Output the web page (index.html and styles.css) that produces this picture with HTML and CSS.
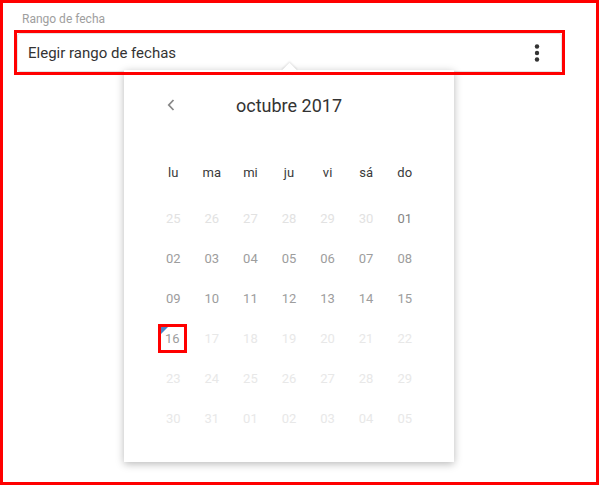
FILE: index.html
```html
<!DOCTYPE html>
<html lang="es">
<head>
  <meta charset="UTF-8" />
  <title>Rango de fecha</title>
  <link rel="stylesheet" href="styles.css">
</head>
<body>
  <div class="frame">
    <div class="field-label">Rango de fecha</div>

    <div class="date-field">
      <div class="date-input">
        <span>Elegir rango de fechas</span>
        <svg class="kebab" width="6" height="18" viewBox="0 0 6 18">
          <circle cx="3" cy="2.5" r="2.2" fill="#333" />
          <circle cx="3" cy="9" r="2.2" fill="#333" />
          <circle cx="3" cy="15.5" r="2.2" fill="#333" />
        </svg>
      </div>
    </div>

    <div class="picker">
      <div class="caret"></div>
      <div class="cal-head">
        <svg class="prev" width="8" height="12" viewBox="0 0 8 12">
          <path d="M6.5 1 L1.8 6 L6.5 11" fill="none" stroke="#888" stroke-width="1.8" />
        </svg>
        <div class="month">octubre 2017</div>
        <span></span>
      </div>

      <div class="weekdays">
        <span>lu</span><span>ma</span><span>mi</span><span>ju</span><span>vi</span><span>sá</span><span>do</span>
      </div>

      <div class="days">
        <span class="other">25</span><span class="other">26</span><span class="other">27</span><span class="other">28</span><span class="other">29</span><span class="other">30</span><span class="first">01</span>
        <span>02</span><span>03</span><span>04</span><span>05</span><span>06</span><span>07</span><span>08</span>
        <span>09</span><span>10</span><span>11</span><span>12</span><span>13</span><span>14</span><span>15</span>
        <span class="today"><i>16</i></span><span class="off">17</span><span class="off">18</span><span class="off">19</span><span class="off">20</span><span class="off">21</span><span class="off">22</span>
        <span class="off">23</span><span class="off">24</span><span class="off">25</span><span class="off">26</span><span class="off">27</span><span class="off">28</span><span class="off">29</span>
        <span class="off">30</span><span class="off">31</span><span class="off">01</span><span class="off">02</span><span class="off">03</span><span class="off">04</span><span class="off">05</span>
      </div>
    </div>
  </div>
</body>
</html>
```

FILE: styles.css
```css
body {
  margin: 0;
  font-family: Roboto, 'Liberation Sans', sans-serif;
  background: #fff;
  color: #333;
}

.frame {
  position: relative;
  width: 599px;
  height: 485px;
  box-sizing: border-box;
  border: 3px solid #ff0000;
  padding: 9px 0 0 11px;
}

.field-label {
  font-size: 12px;
  line-height: 14px;
  color: #9e9e9e;
  padding-left: 8px;
  margin-bottom: 4px;
}

.date-field {
  position: relative;
  width: 551px;
  height: 45px;
  box-sizing: border-box;
  padding: 3px;
}

/* annotation outline, drawn over the popup */
.date-field::after {
  content: "";
  position: absolute;
  inset: 0;
  z-index: 3;
  border: 3px solid #ff0000;
  pointer-events: none;
}

.date-input {
  display: flex;
  align-items: center;
  justify-content: space-between;
  height: 100%;
  box-sizing: border-box;
  padding: 0 21px 0 10px;
  background: #fff;
  border: 1px solid #e4e4e4;
  border-radius: 3px;
  font-size: 15px;
  color: #333;
}

.kebab {
  display: block;
}

.picker {
  position: absolute;
  z-index: 1;
  left: 121px;
  top: 67px;
  width: 330px;
  height: 392px;
  box-sizing: border-box;
  padding: 20px 30px 0;
  background: #fff;
  box-shadow: 0 2px 8px rgba(0, 0, 0, 0.28);
}

.caret {
  position: absolute;
  top: -5px;
  left: 160px;
  width: 11px;
  height: 11px;
  background: #fff;
  transform: rotate(45deg);
  box-shadow: -1px -1px 2px rgba(0, 0, 0, 0.1);
}

.cal-head {
  position: relative;
  display: grid;
  grid-template-columns: 38.5px 1fr 38.5px;
  align-items: center;
  height: 30px;
}

.prev {
  justify-self: center;
  margin-left: -4px;
}

.month {
  text-align: center;
  font-size: 18px;
  color: #333;
}

.weekdays,
.days {
  display: grid;
  grid-template-columns: repeat(7, 1fr);
  text-align: center;
}

.weekdays {
  margin-top: 32px;
  height: 40px;
  align-items: center;
  font-size: 13px;
  color: #3a3a3a;
}

.days {
  margin-top: 6px;
  grid-auto-rows: 40px;
  align-items: center;
  font-size: 13px;
  color: #9d9d9d;
}

.days span {
  display: flex;
  justify-content: center;
}

.days .other {
  color: #e2e2e2;
}

.days .first {
  color: #858585;
}

.days .off {
  color: #e8e8e8;
}

.days .today i {
  position: relative;
  display: flex;
  align-items: center;
  justify-content: center;
  width: 29px;
  height: 29px;
  box-sizing: border-box;
  border: 3px solid #ff0000;
  font-style: normal;
  margin-left: -2px;
}

.days .today i::before {
  content: "";
  position: absolute;
  top: 0;
  left: 0;
  border-top: 7px solid #4a86c8;
  border-right: 7px solid transparent;
}
```
